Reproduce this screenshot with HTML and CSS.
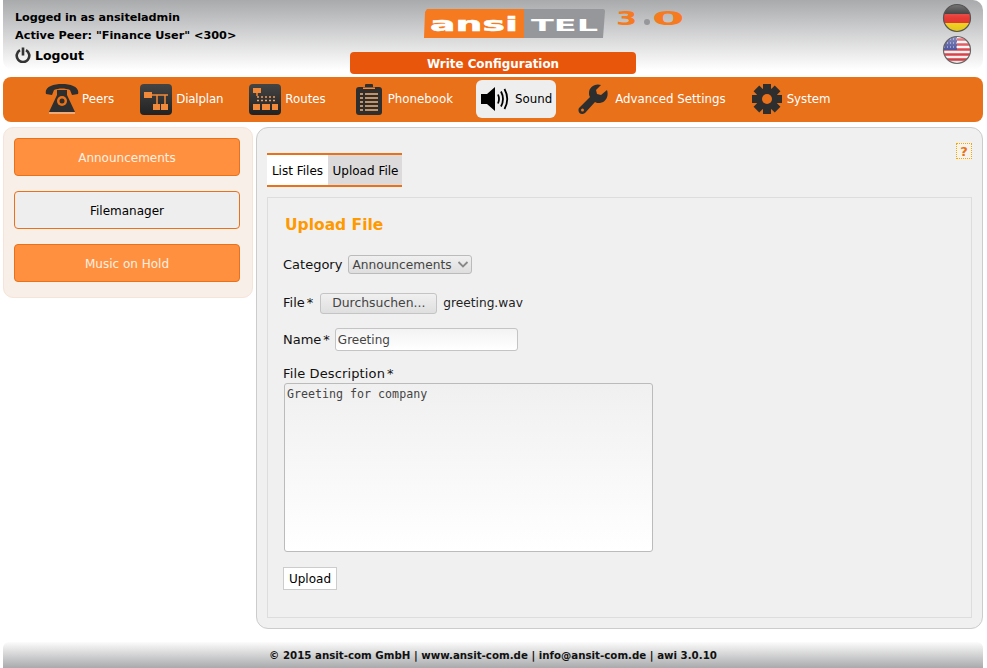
FILE: index.html
```html
<!DOCTYPE html>
<html lang="en">
<head>
<meta charset="utf-8">
<title>Upload File</title>
<link rel="stylesheet" href="styles.css">
</head>
<body>
<div class="page">
  <header class="top">
    <div class="user">
      <div class="user-line user-line-login">Logged in as ansiteladmin</div>
      <div class="user-line">Active Peer: "Finance User" &lt;300&gt;</div>
      <a class="logout">
        <svg class="power" viewBox="0 0 16 16" width="16" height="16"><path d="M5 3.200A6.300 6.300 0 1 0 11 3.200" fill="none" stroke="#333" stroke-width="2.600"/><rect x="6.700" y="0.500" width="2.600" height="8" fill="#333"/></svg>
        Logout
      </a>
    </div>
    <div class="center">
      <svg class="logo" viewBox="0 0 262 30" width="262" height="30">
        <path d="M3 0H100V29H0L1 3Z" fill="#f57a20"/>
        <path d="M100 0H179Q181 0 181 2L179 29H100Z" fill="#96979b"/>
        <text class="logo-t" x="6" y="22" textLength="88" lengthAdjust="spacingAndGlyphs">ansi</text>
        <text class="logo-e" x="107" y="22" textLength="67" lengthAdjust="spacingAndGlyphs">TEL</text>
        <text class="logo-v" transform="translate(192 16) scale(1.600 1)">3</text>
        <circle cx="223" cy="13" r="3" fill="#96979b"/>
        <text class="logo-v" transform="translate(228 16) scale(2.450 1)">0</text>
      </svg>
      <button class="write" type="button">Write Configuration</button>
    </div>
    <div class="flags">
      <svg viewBox="0 0 30 30" width="30" height="30">
        <defs>
          <clipPath id="ball"><circle cx="15" cy="15" r="13.500"/></clipPath>
          <linearGradient id="gloss" x1="0" y1="0" x2="0" y2="1"><stop offset="0" stop-color="#fff" stop-opacity=".4"/><stop offset=".5" stop-color="#fff" stop-opacity=".05"/><stop offset="1" stop-color="#000" stop-opacity=".1"/></linearGradient>
        </defs>
        <g clip-path="url(#ball)">
          <rect width="30" height="11" fill="#262626"/>
          <rect y="11" width="30" height="9" fill="#e4302a"/>
          <rect y="20" width="30" height="10" fill="#f5d51a"/>
          <rect width="30" height="30" fill="url(#gloss)"/>
        </g>
        <circle cx="15" cy="15" r="13.500" fill="none" stroke="#555" stroke-width="1.200"/>
      </svg>
      <svg viewBox="0 0 30 30" width="30" height="30">
        <g clip-path="url(#ball)">
          <rect width="30" height="30" fill="#f6f6f6"/>
          <path d="M0 4.500H30M0 9.500H30M0 14.500H30M0 19.500H30M0 24.500H30" stroke="#dd3a42" stroke-width="2.400"/>
          <rect width="15" height="15" fill="#454c98"/>
          <path d="M2 4H15M2 8H15M2 12H15" stroke="#d5d8ee" stroke-width="1" stroke-dasharray="1 2"/>
          <rect width="30" height="30" fill="url(#gloss)"/>
        </g>
        <circle cx="15" cy="15" r="13.500" fill="none" stroke="#666" stroke-width="1.200"/>
      </svg>
    </div>
  </header>

  <nav class="nav">
    <a class="nav-item nav-item-peers">
      <svg viewBox="0 0 34 30" width="34" height="30"><path d="M1 10C-1 3 8 0 17 0S35 3 33 10L27 11 25 6C20 4 14 4 9 6L7 11Z" fill="#2e2e2e"/><path d="M12 6H22V11L30 28H4L12 11Z" fill="#2e2e2e"/><circle cx="17" cy="17" r="5" fill="#e8711a"/><circle cx="17" cy="17" r="2.500" fill="#2e2e2e"/><rect x="4" y="28.500" width="26" height="1" fill="#f3e6d8"/></svg>
      <span>Peers</span>
    </a>
    <a class="nav-item nav-item-plan">
      <svg viewBox="0 0 32 31" width="32" height="31"><defs><linearGradient id="tile" x1="0" y1="0" x2="0" y2="1"><stop offset="0" stop-color="#444"/><stop offset="1" stop-color="#222"/></linearGradient></defs><rect width="32" height="31" rx="4" fill="url(#tile)"/><rect x="4" y="8" width="8" height="6" fill="#f08a3a"/><path d="M12 11H28M17 11V20M25 11V20" stroke="#f08a3a" stroke-width="1.500" fill="none"/><rect x="13" y="20" width="7" height="6" fill="#f08a3a"/><rect x="21" y="20" width="7" height="6" fill="#f08a3a"/></svg>
      <span>Dialplan</span>
    </a>
    <a class="nav-item">
      <svg viewBox="0 0 32 31" width="32" height="31"><rect width="32" height="31" rx="4" fill="url(#tile)"/><rect x="4" y="4" width="8" height="5" fill="#f08a3a"/><path d="M8 9V12" stroke="#f08a3a" stroke-width="1.500"/><path d="M8 13H27M8 16.500H27" stroke="#f0a060" stroke-width="1.500" stroke-dasharray="2 2"/><rect x="4" y="20" width="7" height="6" fill="#f08a3a"/><rect x="13" y="20" width="8" height="6" fill="#f08a3a"/><rect x="23" y="20" width="6" height="6" fill="#f08a3a"/></svg>
      <span>Routes</span>
    </a>
    <a class="nav-item nav-item-book">
      <svg viewBox="0 0 26 31" width="26" height="31"><rect y="3" width="26" height="28" rx="3" fill="#2e2e2e"/><rect x="9" y="0" width="8" height="5" rx="1" fill="#2e2e2e"/><rect x="7" y="3.500" width="12" height="1.500" fill="#f08a3a"/><path d="M4 10H7M9 10H22M4 14H7M9 14H22M4 18H7M9 18H22M4 22H7M9 22H22M4 26H7M9 26H22" stroke="#f5b27a" stroke-width="1.600"/></svg>
      <span>Phonebook</span>
    </a>
    <a class="nav-item nav-item-on">
      <svg viewBox="0 0 29 24" width="29" height="24"><path d="M0 7H6L14 0V24L6 17H0Z" fill="#000"/><path d="M17 7.500Q19 12 17 16.500M20 4.500Q24 12 20 19.500M23.500 2Q29 12 23.500 22" fill="none" stroke="#000" stroke-width="1.800"/></svg>
      <span>Sound</span>
    </a>
    <a class="nav-item nav-item-tool">
      <svg viewBox="0 0 30 31" width="30" height="31"><path d="M29 6L23 11 19 10 18 6 23 1C17-1 11 3 11 9 11 10 11 12 12 13L1 24C-1 28 3 32 7 29L17 18C18 19 20 19 22 19 28 18 31 12 29 6Z" fill="#2e2e2e"/><circle cx="4.500" cy="26" r="1.500" fill="#e8711a"/></svg>
      <span>Advanced Settings</span>
    </a>
    <a class="nav-item nav-item-sys">
      <svg viewBox="0 0 30 30" width="30" height="30"><g fill="#2e2e2e"><rect x="11" y="0" width="8" height="30"/><rect x="11" y="0" width="8" height="30" transform="rotate(45 15 15)"/><rect x="11" y="0" width="8" height="30" transform="rotate(90 15 15)"/><rect x="11" y="0" width="8" height="30" transform="rotate(135 15 15)"/><circle cx="15" cy="15" r="11"/></g><circle cx="15" cy="15" r="5" fill="#e8711a"/></svg>
      <span>System</span>
    </a>
  </nav>

  <div class="main">
    <aside class="side">
      <a class="side-btn">Announcements</a>
      <a class="side-btn side-btn-on">Filemanager</a>
      <a class="side-btn">Music on Hold</a>
    </aside>
    <section class="content">
      <div class="help-row"><span class="help">?</span></div>
      <div class="tabs">
        <a class="tab tab-list">List Files</a>
        <a class="tab tab-upload">Upload File</a>
      </div>
      <form class="panel">
        <h2 class="title">Upload File</h2>
        <div class="row row-cat">
          <label class="lbl">Category</label>
          <span class="select-wrap">
            <select class="select"><option>Announcements</option></select>
            <svg class="chev" viewBox="0 0 12 7" width="12" height="7"><path d="M1.500 1L6 5.500 10.500 1" fill="none" stroke="#888" stroke-width="1.800"/></svg>
          </span>
        </div>
        <div class="row row-file">
          <label class="lbl">File<span class="req">*</span></label>
          <button class="browse" type="button">Durchsuchen...</button>
          <span class="fname">greeting.wav</span>
        </div>
        <div class="row row-name">
          <label class="lbl">Name<span class="req">*</span></label>
          <input class="text" type="text" value="Greeting">
        </div>
        <label class="lbl lbl-desc">File Description<span class="req">*</span></label>
        <textarea class="area">Greeting for company</textarea>
        <button class="upload" type="button">Upload</button>
      </form>
    </section>
  </div>

  <footer class="foot">© 2015 ansit-com GmbH | www.ansit-com.de | info@ansit-com.de | awi 3.0.10</footer>
</div>
</body>
</html>
```
FILE: styles.css
```css
* { box-sizing: border-box; }
html, body { margin: 0; padding: 0; background: #fff; }
body { font-family: "DejaVu Sans", sans-serif; font-size: 13px; color: #000; height: 668px; overflow: hidden; }
.page { width: 980px; margin-left: 3px; }

.top { height: 70px; display: grid; grid-template-columns: 347px 286px 1fr; border-radius: 0 10px 10px 10px; background: linear-gradient(#a9aaac, #ffffff); }
.user { padding: 9px 0 0 12px; font-weight: bold; font-size: 11.250px; }
.user-line { height: 18px; line-height: 18px; }
.user-line-login { letter-spacing: -.08px; }
.logout { display: flex; align-items: center; gap: 4px; height: 20px; font-size: 12.500px; }
.power { flex: none; }
.center { padding-top: 9px; }
.logo { display: block; margin-left: 74px; overflow: visible; }
.logo-t { font-family: "DejaVu Sans", sans-serif; font-weight: bold; font-size: 20px; fill: #fff; stroke: #fff; stroke-width: .5px; }
.logo-e { font-family: "DejaVu Sans", sans-serif; font-weight: bold; font-size: 16.500px; fill: #fff; }
.logo-v { font-family: "DejaVu Sans", sans-serif; font-weight: bold; font-size: 19px; fill: #f57a20; }
.write { display: block; width: 286px; height: 22px; margin-top: 13px; padding: 2px 0 0; border: 0; border-radius: 4px; background: #e8560c; color: #fff; font: bold 11.900px "DejaVu Sans", sans-serif; }
.flags { display: flex; flex-direction: column; align-items: flex-end; gap: 2px; padding: 3px 11px 0 0; }
.flags svg { display: block; }

.nav { height: 45px; margin-top: 7px; padding: 3px 0 0 37px; display: flex; align-items: flex-start; gap: 18px; background: #e8711a; border-radius: 8px; }
.nav-item { display: flex; align-items: center; gap: 4px; height: 38px; padding: 0 3px 0 5px; color: #fff; font-size: 11.800px; border-radius: 6px; }
.nav-item span { padding-bottom: 1px; }
.nav-item svg { flex: none; }
.nav-item-peers { gap: 3px; }
.nav-item-plan { letter-spacing: -.15px; }
.nav-item-book { padding: 0 5px 0 9px; gap: 6px; }
.nav-item-on { padding-right: 4px; background: #eeeeee; color: #000; gap: 5px; }
.nav-item-tool { gap: 7px; padding-left: 4px; }
.nav-item-sys { gap: 5px; }

.main { display: flex; align-items: flex-start; gap: 3px; margin-top: 5px; }
.side { width: 250px; height: 171px; flex: none; padding: 10px 12px 0 10px; display: flex; flex-direction: column; gap: 15px; background: #f8efe8; border: 1px solid #f6e4d8; border-radius: 10px; }
.side-btn { height: 38px; padding-top: 2px; display: flex; align-items: center; justify-content: center; background: #ff9040; border: 1px solid #e8711a; border-radius: 4px; color: #fdf0e0; font-size: 12px; }
.side-btn-on { background: #eeeeee; color: #000; }

.content { width: 727px; height: 502px; flex: none; padding: 0 10px; background: #f0f0f0; border: 1px solid #cccccc; border-radius: 12px; }
.help-row { display: flex; justify-content: flex-end; padding-top: 15px; height: 25px; }
.help { width: 16px; height: 16px; display: flex; align-items: center; justify-content: center; border: 1px dotted #f5a800; color: #e8711a; font-size: 13px; font-weight: bold; background: #f5f3ea; }
.tabs { display: flex; width: 135px; height: 34px; border-top: 2px solid #e8711a; border-bottom: 2px solid #e8711a; }
.tab { display: flex; align-items: center; justify-content: center; padding-top: 2px; font-size: 12px; }
.tab-list { width: 61px; background: #fff; }
.tab-upload { width: 74px; padding-left: 1px; background: #dcdada; }

.panel { width: 705px; height: 421px; margin-top: 10px; padding: 0 15px; border: 1px solid #dddddd; display: flex; flex-direction: column; align-items: flex-start; }
.title { margin: 16px 0 0 2px; font-size: 15.500px; line-height: 22px; font-weight: bold; color: #ff9900; }
.row { display: flex; align-items: center; }
.row-cat { margin-top: 18px; height: 20px; gap: 6px; }
.row-file { margin-top: 18px; height: 22px; gap: 6px; }
.row-file .lbl { padding-bottom: 2px; }
.row-name { margin-top: 14px; height: 23px; gap: 5px; }
.lbl { font-size: 13px; color: #111; white-space: nowrap; }
.req { margin-left: 2px; }
.select-wrap { position: relative; display: block; height: 19px; }
.select { appearance: none; display: block; width: 124px; height: 19px; padding: 2px 0 0 3px; border: 1px solid #bbbbbb; border-radius: 3px; background: linear-gradient(#f0f0f0, #dedede); color: #444; font: 12.200px "DejaVu Sans", sans-serif; }
.chev { position: absolute; right: 3px; top: 6px; }
.browse { width: 117px; height: 21px; margin-left: 1px; padding: 0 0 2px; border: 1px solid #c4c4c4; border-radius: 3px; background: linear-gradient(#f0f0f0, #dfdfdf); color: #444; font: 12.400px "DejaVu Sans", sans-serif; }
.fname { font-size: 12.200px; color: #222; }
.text { width: 183px; height: 23px; padding: 0 2px; border: 1px solid #c4c4c4; border-radius: 3px; background: linear-gradient(#f3f3f3, #ffffff); color: #444; font: 12px "DejaVu Sans", sans-serif; }
.lbl-desc { margin-top: 14px; height: 17px; line-height: 18px; letter-spacing: .13px; }
.area { display: block; width: 369px; height: 169px; margin: 1px 0 0 1px; padding: 3px 2px; resize: none; border: 1px solid #bbbbbb; border-radius: 3px; background: linear-gradient(#f0f0f0, #ffffff); color: #444; font: 11.650px "DejaVu Sans Mono", monospace; }
.upload { width: 54px; height: 23px; margin-top: 15px; padding: 0; border: 1px solid #cccccc; background: #fff; color: #000; font: 12px "DejaVu Sans", sans-serif; }

.foot { height: 26px; margin-top: 13px; display: flex; align-items: center; justify-content: center; border-radius: 6px 6px 0 0; background: linear-gradient(#fcfcfc, #a9aaac); font-size: 10.250px; font-weight: bold; color: #111; }
```
